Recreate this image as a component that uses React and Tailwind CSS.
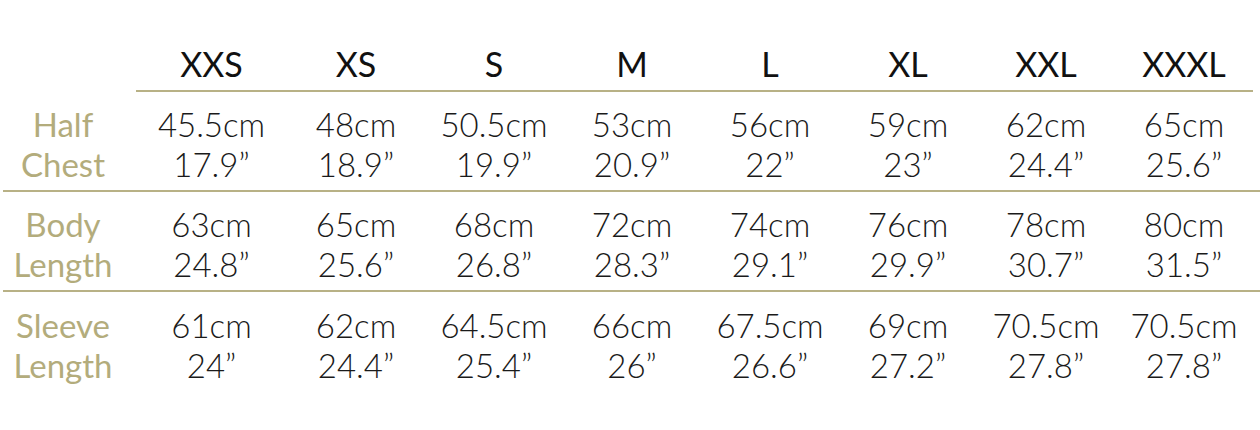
const SIZES = ["XXS", "XS", "S", "M", "L", "XL", "XXL", "XXXL"];

const ROWS = [
  {
    label: ["Half", "Chest"],
    values: [
      ["45.5cm", "17.9”"],
      ["48cm", "18.9”"],
      ["50.5cm", "19.9”"],
      ["53cm", "20.9”"],
      ["56cm", "22”"],
      ["59cm", "23”"],
      ["62cm", "24.4”"],
      ["65cm", "25.6”"],
    ],
  },
  {
    label: ["Body", "Length"],
    values: [
      ["63cm", "24.8”"],
      ["65cm", "25.6”"],
      ["68cm", "26.8”"],
      ["72cm", "28.3”"],
      ["74cm", "29.1”"],
      ["76cm", "29.9”"],
      ["78cm", "30.7”"],
      ["80cm", "31.5”"],
    ],
  },
  {
    label: ["Sleeve", "Length"],
    values: [
      ["61cm", "24”"],
      ["62cm", "24.4”"],
      ["64.5cm", "25.4”"],
      ["66cm", "26”"],
      ["67.5cm", "26.6”"],
      ["69cm", "27.2”"],
      ["70.5cm", "27.8”"],
      ["70.5cm", "27.8”"],
    ],
  },
];

const cols = "grid grid-cols-[133px_151px_repeat(7,138px)]";

export default function App() {
  return (
    <div className="h-[430px] w-[1260px] bg-white pl-[3px] font-['Lato',sans-serif] text-[33px] leading-[40px]">
      {/* header */}
      <div className={`${cols} h-[92px] items-end`}>
        <div />
        {SIZES.map((s) => (
          <div key={s} className="border-b-2 border-[#b8b186] pb-[6px] text-center text-[34px] font-normal text-[#111]">
            {s}
          </div>
        ))}
      </div>

      {ROWS.map((row, i) => (
        <div
          key={row.label.join(" ")}
          className={`${cols} h-[100px] items-center pt-[6px] ${i < ROWS.length - 1 ? "border-b-2 border-[#b8b186]" : ""}`}
        >
          <div className="pr-[13px] text-center text-[33px] font-normal text-[#b3ac7c]">
            {row.label.map((l) => (
              <div key={l}>{l}</div>
            ))}
          </div>
          {row.values.map(([cm, inch], j) => (
            <div key={j} className="text-center font-light text-[#1a1a1a]">
              <div>{cm}</div>
              <div>{inch}</div>
            </div>
          ))}
        </div>
      ))}
    </div>
  );
}
